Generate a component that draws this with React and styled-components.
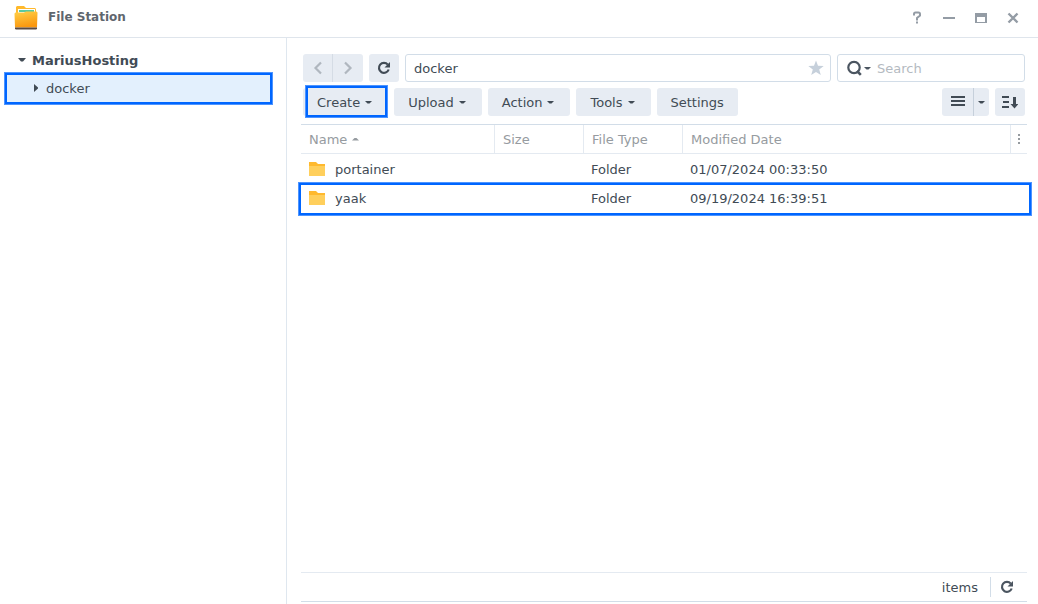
import styled, { createGlobalStyle, css } from "styled-components";

const GlobalStyle = createGlobalStyle`
    * {
        box-sizing: border-box;
    }

    body {
        margin: 0;
        background: #fff;
        color: #414b55;
    }

    body, button, input {
        font-family: Verdana, "DejaVu Sans", sans-serif;
        font-size: 13px;
        line-height: 17px;
    }

    svg {
        display: block;
        flex: none;
    }
`

const highlight = css`
    content: "";
    position: absolute;
    inset: -1px -2px -2px;
    border: 2px solid #0066ff;
    box-shadow: 0 0 0 1px #4d94ff;
    pointer-events: none;
`

const Window = styled.div`
    display: flex;
    flex-direction: column;
    min-height: 100vh;
`

const TitleBar = styled.header`
    display: flex;
    align-items: center;
    height: 38px;
    padding: 0 17px 3px 14px;
    border-bottom: 1px solid #dfe5ec;

    h1 {
        flex: 1;
        margin: 0 0 0 10px;
        color: #5f666e;
        font-size: 12px;
        line-height: 16px;
    }
`

const WindowControls = styled.div`
    display: flex;
    gap: 16px;
`

const IconButton = styled.button`
    display: flex;
    align-items: center;
    justify-content: center;
    gap: 2px;
    padding: 0;
    border: 0;
    background: none;
    color: ${({ $color }) => $color || "#4b5560"};
`

const Body = styled.div`
    display: flex;
    flex: 1;
`

const Sidebar = styled.nav`
    flex: 0 0 287px;
    padding: 8px 16px 0 7px;
    border-right: 1px solid #dfe7ef;
`

const TreeItem = styled.a`
    position: relative;
    display: flex;
    align-items: center;
    gap: 6px;
    height: 28px;
    padding-left: ${({ $level }) => ($level ? 25 : 11)}px;
    color: inherit;
    text-decoration: none;
    font-weight: ${({ $level }) => ($level ? 400 : 700)};
    background: ${({ $selected }) => ($selected ? "#e3f0fd" : "none")};

    &::after {
        ${({ $selected }) => $selected && highlight}
    }
`

const Main = styled.main`
    display: flex;
    flex: 1;
    flex-direction: column;
    min-width: 0;
    padding: 16px 11px 2px 14px;
`

const Toolbar = styled.div`
    display: flex;
    gap: 6px;
    margin: 0 2px ${({ $last }) => ($last ? 8 : 6)}px;
`

const Spacer = styled.div`
    flex: 1;
`

const ButtonGroup = styled.div`
    display: flex;

    button {
        border-radius: 3px 0 0 3px;
    }

    button + button {
        border-left: 1px solid ${({ $divider }) => $divider || "#d5dce5"};
        border-radius: 0 3px 3px 0;
    }
`

const ToolButton = styled.button`
    position: relative;
    display: flex;
    align-items: center;
    justify-content: center;
    gap: 5px;
    height: 28px;
    width: ${({ $width }) => ($width ? `${$width}px` : "auto")};
    padding: 0 ${({ $width }) => ($width ? 0 : 14)}px;
    border: 0;
    border-radius: 3px;
    background: #e7ecf3;
    color: ${({ $muted }) => ($muted ? "#b0b7bf" : "#414b55")};
    white-space: nowrap;

    &::after {
        ${({ $highlighted }) => $highlighted && highlight}
        inset: -2px 1px -1px 3px;
    }
`

const MenuCaret = styled.span`
    margin-right: 2px;
`

const Field = styled.div`
    display: flex;
    flex: ${({ $width }) => ($width ? `0 1 ${$width}px` : "1")};
    align-items: center;
    gap: 6px;
    height: 28px;
    min-width: 0;
    padding: 0 ${({ $width }) => ($width ? 9 : 6)}px 0 ${({ $width }) => ($width ? 9 : 8)}px;
    border: 1px solid #d2dde8;
    border-radius: 3px;

    input {
        flex: 1;
        height: 17px;
        min-width: 0;
        padding: 0;
        border: 0;
        outline: 0;
        background: none;
        color: #414b55;
    }

    input::placeholder {
        color: #b4bac1;
        opacity: 1;
    }
`

const FileTable = styled.table`
    width: 100%;
    border-top: 1px solid #d2dde8;
    border-spacing: 0;
    table-layout: fixed;

    th, td {
        height: 29px;
        padding: 0 8px;
        text-align: left;
        font-weight: 400;
        white-space: nowrap;
    }

    th {
        border-bottom: 1px solid #e4eaf1;
        color: #969ba0;
    }

    td {
        padding-top: 2px;
    }

    th + th {
        border-left: 1px solid #e4eaf1;
    }

    th:last-child {
        padding: 0;
    }
`

const Column = styled.col`
    width: ${({ $width }) => ($width ? `${$width}px` : "auto")};
`

const SortLabel = styled.span`
    display: flex;
    align-items: center;
    gap: 5px;
`

const FileRow = styled.tr`
    position: relative;

    td:last-child::after {
        ${({ $highlighted }) => $highlighted && highlight}
        inset: 0 -4px -3px -2px;
    }
`

const FileName = styled.span`
    display: flex;
    align-items: center;
    gap: 10px;
`

const StatusBar = styled.footer`
    display: flex;
    align-items: center;
    justify-content: flex-end;
    height: 30px;
    margin-top: auto;
    border-top: 1px solid #e4eaf1;
    border-bottom: 1px solid #d2dde8;

    span {
        padding-right: 12px;
    }

    button {
        height: 20px;
        padding: 0 13px 0 9px;
        border-left: 1px solid #d2dde8;
    }
`

const CaretDown = () => (
    <svg width="7" height="4" viewBox="0 0 7 4" fill="currentColor">
        <path d="M0 1h7L4.500 3.500h-2z" />
    </svg>
)

const CaretUp = () => (
    <svg width="7" height="4" viewBox="0 0 7 4" fill="currentColor">
        <path d="M0 3.500h7L4.500 1h-2z" />
    </svg>
)

const TreeDown = () => (
    <svg width="8" height="8" viewBox="0 0 8 8" fill="currentColor">
        <path d="M0 2h8L5 5.500H3z" />
    </svg>
)

const TreeRight = () => (
    <svg width="8" height="8" viewBox="0 0 8 8" fill="currentColor">
        <path d="M2 0l4 3.500v1L2 8z" />
    </svg>
)

const Chevron = ({ right }) => (
    <svg width="10" height="14" viewBox="0 0 10 14" fill="none" stroke="currentColor" strokeWidth="2.200">
        <path d={right ? "M2 1.500 7.500 7 2 12.500" : "M8 1.500 2.500 7 8 12.500"} />
    </svg>
)

const ReloadIcon = () => (
    <svg width="14" height="14" viewBox="0 0 14 14">
        <path d="M10.800 3.600A5 5 0 1 0 11.700 8.500" fill="none" stroke="currentColor" strokeWidth="2.200" />
        <path d="M13 1v5.500H7.500z" fill="currentColor" />
    </svg>
)

const StarIcon = () => (
    <svg width="16" height="16" viewBox="0 0 16 16" fill="currentColor">
        <path d="m8 .5 2 5.300 5.700.2-4.500 3.500 1.600 5.500L8 11.900 3.200 15l1.600-5.500L.3 6 6 5.800z" />
    </svg>
)

const SearchIcon = () => (
    <svg width="15" height="16" viewBox="0 0 15 16" fill="none" stroke="currentColor">
        <circle cx="7" cy="7.500" r="5.700" strokeWidth="2.200" />
        <path d="m10 11 3.800 3.800" strokeWidth="2.600" />
    </svg>
)

const ListIcon = () => (
    <svg width="14" height="12" viewBox="0 0 14 12" fill="currentColor">
        <path d="M0 0h14v2H0zM0 4h14v2H0zM0 8h14v2H0z" />
    </svg>
)

const SortIcon = () => (
    <svg width="16" height="14" viewBox="0 0 16 14" fill="currentColor">
        <path d="M0 1h7v2H0zM1 6h6v2H1zM0 11h7v2H0zM11 2h3v7h2.500l-4 4.500-4-4.500H11z" />
    </svg>
)

const MoreIcon = () => (
    <svg width="16" height="12" viewBox="0 0 16 12" fill="#969ba0">
        <path d="M7 1h2v2H7zM7 5h2v2H7zM7 9h2v2H7z" />
    </svg>
)

const FolderIcon = () => (
    <svg width="16" height="16" viewBox="0 0 16 16">
        <path d="M0 0h7l2 2h7v12H0z" fill="#ffb92e" />
        <path d="M0 4h16v10H0z" fill="#ffcf5c" />
    </svg>
)

const AppLogo = () => (
    <svg width="24" height="28" viewBox="0 -2 24 28">
        <defs>
            <linearGradient id="front" x1="0" y1="0" x2="0.3" y2="1">
                <stop offset="0" stopColor="#ffd149" />
                <stop offset="1" stopColor="#fb980f" />
            </linearGradient>
        </defs>
        <path d="M2 2 3 1h7l2 2h9l1 1v8H2z" fill="#ffb92c" />
        <path d="M4 4h17v5H4z" fill="#fff" />
        <path d="M5 5h15v2H5z" fill="#59c9a0" />
        <path d="M.5 8.500 1.500 7.500H10l2-1h10.500l1 1L23 22.500H1z" fill="url(#front)" />
        <path d="M1 22.500h22V24l-1 .5H2L1 24z" fill="#5b4a42" />
    </svg>
)

const HelpIcon = () => (
    <svg width="16" height="16" viewBox="0 0 16 16" fill="none" stroke="currentColor" strokeWidth="2">
        <path d="M5 6.500V5Q5 3.500 6.500 3.500h3Q11 3.500 11 5v1.500L8 9v2.500M8 12.500v2" />
    </svg>
)

const MinimizeIcon = () => (
    <svg width="16" height="16" viewBox="0 0 16 16" fill="currentColor">
        <path d="M2 8h12v2H2z" />
    </svg>
)

const MaximizeIcon = () => (
    <svg width="16" height="16" viewBox="0 0 16 16" fill="currentColor">
        <path fillRule="evenodd" d="M2 4h12v10H2zM4 8v5h8V8z" />
    </svg>
)

const CloseIcon = () => (
    <svg width="16" height="16" viewBox="0 0 16 16" fill="none" stroke="currentColor" strokeWidth="2.400">
        <path d="m3.500 4.500 9 9m0-9-9 9" />
    </svg>
)

const controls = [
    { label: "Help", Icon: HelpIcon },
    { label: "Minimize", Icon: MinimizeIcon },
    { label: "Maximize", Icon: MaximizeIcon },
    { label: "Close", Icon: CloseIcon },
]

const actions = [
    { label: "Create", menu: true, highlighted: true },
    { label: "Upload", menu: true },
    { label: "Action", menu: true },
    { label: "Tools", menu: true },
    { label: "Settings" },
]

const files = [
    { name: "portainer", type: "Folder", modified: "01/07/2024 00:33:50" },
    { name: "yaak", type: "Folder", modified: "09/19/2024 16:39:51", highlighted: true },
]

export default function App() {
    return (
        <>
            <GlobalStyle />
            <Window>
                <TitleBar>
                    <AppLogo />
                    <h1>File Station</h1>
                    <WindowControls>
                        {controls.map(({ label, Icon }) => (
                            <IconButton key={label} aria-label={label} $color="#949ca5"><Icon /></IconButton>
                        ))}
                    </WindowControls>
                </TitleBar>

                <Body>
                    <Sidebar>
                        <TreeItem href="#"><TreeDown />MariusHosting</TreeItem>
                        <TreeItem href="#docker" $level={1} $selected><TreeRight />docker</TreeItem>
                    </Sidebar>

                    <Main>
                        <Toolbar>
                            <ButtonGroup>
                                <ToolButton aria-label="Back" $width={29} $muted><Chevron /></ToolButton>
                                <ToolButton aria-label="Forward" $width={31} $muted><Chevron right /></ToolButton>
                            </ButtonGroup>
                            <ToolButton aria-label="Refresh" $width={30}><ReloadIcon /></ToolButton>
                            <Field>
                                <input aria-label="Path" defaultValue="docker" />
                                <IconButton aria-label="Add to favorites" $color="#c6d0db"><StarIcon /></IconButton>
                            </Field>
                            <Field $width={188}>
                                <IconButton aria-label="Search options"><SearchIcon /><CaretDown /></IconButton>
                                <input aria-label="Search" placeholder="Search" />
                            </Field>
                        </Toolbar>

                        <Toolbar $last>
                            {actions.map(({ label, menu, highlighted }) => (
                                <ToolButton key={label} $highlighted={highlighted}>
                                    {label}
                                    {menu && <MenuCaret><CaretDown /></MenuCaret>}
                                </ToolButton>
                            ))}
                            <Spacer />
                            <ButtonGroup $divider="#c6d0db">
                                <ToolButton aria-label="List view" $width={31}><ListIcon /></ToolButton>
                                <ToolButton aria-label="View options" $width={16}><CaretDown /></ToolButton>
                            </ButtonGroup>
                            <ToolButton aria-label="Sort" $width={30}><SortIcon /></ToolButton>
                        </Toolbar>

                        <FileTable>
                            <colgroup>
                                <Column $width={193} />
                                <Column $width={89} />
                                <Column $width={99} />
                                <Column />
                                <Column $width={17} />
                            </colgroup>
                            <thead>
                                <tr>
                                    <th><SortLabel>Name<CaretUp /></SortLabel></th>
                                    <th>Size</th>
                                    <th>File Type</th>
                                    <th>Modified Date</th>
                                    <th><IconButton aria-label="Columns"><MoreIcon /></IconButton></th>
                                </tr>
                            </thead>
                            <tbody>
                                {files.map(({ name, type, modified, highlighted }) => (
                                    <FileRow key={name} $highlighted={highlighted}>
                                        <td><FileName><FolderIcon />{name}</FileName></td>
                                        <td></td>
                                        <td>{type}</td>
                                        <td>{modified}</td>
                                        <td></td>
                                    </FileRow>
                                ))}
                            </tbody>
                        </FileTable>

                        <StatusBar>
                            <span>items</span>
                            <IconButton aria-label="Reload"><ReloadIcon /></IconButton>
                        </StatusBar>
                    </Main>
                </Body>
            </Window>
        </>
    )
}
